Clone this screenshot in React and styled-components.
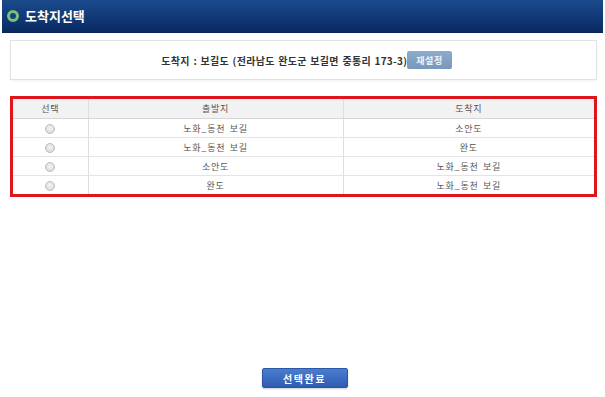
import styled, { createGlobalStyle } from 'styled-components';

const GlobalStyle = createGlobalStyle`
  html, body {
    margin: 0;
    padding: 0;
    background: #fff;
  }
  body {
    font-family: "Noto Sans CJK KR", "Noto Sans", sans-serif;
  }
`;

const routes = [
  { from: '노화_동천 보길', to: '소안도' },
  { from: '노화_동천 보길', to: '완도' },
  { from: '소안도', to: '노화_동천 보길' },
  { from: '완도', to: '노화_동천 보길' },
];

function App() {
  return (
    <>
      <GlobalStyle />
      <Page>
        <TitleBar>
          <Ring />
          <Title>도착지선택</Title>
        </TitleBar>

        <InfoBox>
          <InfoText>도착지 : 보길도 (전라남도 완도군 보길면 중통리 173-3)</InfoText>
          <ResetButton type="button">재설정</ResetButton>
        </InfoBox>

        <TableFrame>
          <Table>
            <colgroup>
              <col style={{ width: 75 }} />
              <col style={{ width: 255 }} />
              <col />
            </colgroup>
            <thead>
              <tr>
                <Th>선택</Th>
                <Th>출발지</Th>
                <Th>도착지</Th>
              </tr>
            </thead>
            <tbody>
              {routes.map((r, i) => (
                <tr key={i}>
                  <Td><Radio /></Td>
                  <Td>{r.from}</Td>
                  <Td>{r.to}</Td>
                </tr>
              ))}
            </tbody>
          </Table>
        </TableFrame>

        <Footer>
          <DoneButton type="button">선택완료</DoneButton>
        </Footer>
      </Page>
    </>
  );
}

export default App;

const Page = styled.div`
  height: 397px;
  display: flex;
  flex-direction: column;
  padding: 0 2px;
  box-sizing: border-box;
`;

const TitleBar = styled.div`
  height: 33px;
  display: flex;
  align-items: center;
  gap: 6px;
  padding-left: 5px;
  background: linear-gradient(to bottom, #1b4b8d 0%, #123a78 50%, #0a2a62 100%);
  border-bottom: 1px solid #0a2255;
  box-sizing: border-box;
`;

const Ring = styled.span`
  width: 6px;
  height: 6px;
  border-radius: 50%;
  border: 3px solid #79c07a;
  background: #16407e;
`;

const Title = styled.h1`
  margin: 0 0 1px;
  font-size: 13px;
  font-weight: bold;
  color: #fff;
`;

const InfoBox = styled.div`
  margin: 7px 6px 0 8px;
  height: 40px;
  display: flex;
  align-items: center;
  justify-content: center;
  gap: 0;
  padding-left: 6px;
  border: 1px solid #e2e2e2;
  box-shadow: 0 1px 2px rgba(0, 0, 0, 0.06);
  box-sizing: border-box;
  background: #fff;
`;

const InfoText = styled.span`
  font-size: 10px;
  font-weight: bold;
  color: #333;
  letter-spacing: 0.3px;
  word-spacing: 1px;
`;

const ResetButton = styled.button`
  height: 18px;
  padding: 0 9px;
  border: none;
  border-radius: 2px;
  background: linear-gradient(to bottom, #8eabc9, #7898bb);
  color: #eef3f8;
  font-family: inherit;
  font-size: 9px;
  font-weight: bold;
  letter-spacing: 0.5px;
`;

const TableFrame = styled.div`
  margin: 16px 6px 0 8px;
  border: 3px solid #e0141b;
  background: #fff;
`;

const Table = styled.table`
  width: 100%;
  border-collapse: collapse;
  table-layout: fixed;
`;

const Th = styled.th`
  height: 19px;
  padding: 0;
  background: #f2f2f2;
  border-bottom: 1px solid #d6d6d6;
  border-left: 1px solid #dedede;
  font-size: 9px;
  font-weight: normal;
  color: #555;
  letter-spacing: 0.8px;
  &:first-child {
    border-left: none;
  }
`;

const Td = styled.td`
  height: 18px;
  padding: 0;
  text-align: center;
  border-bottom: 1px solid #e4e4e4;
  border-left: 1px solid #dedede;
  font-size: 9px;
  color: #555;
  letter-spacing: 0.8px;
  word-spacing: 1.5px;
  &:first-child {
    border-left: none;
  }
  tr:last-child > & {
    border-bottom: none;
  }
`;

const Radio = styled.span`
  display: inline-block;
  vertical-align: middle;
  width: 8px;
  height: 8px;
  border-radius: 50%;
  border: 1px solid #bdbdbd;
  background: radial-gradient(circle at 50% 40%, #f4f4f4, #d4d4d4);
`;

const Footer = styled.div`
  margin-top: auto;
  padding-bottom: 9px;
  display: flex;
  justify-content: center;
`;

const DoneButton = styled.button`
  width: 86px;
  height: 20px;
  border: 1px solid #2c56a3;
  border-radius: 2px;
  background: linear-gradient(to bottom, #4a7dd0, #2f5cb0);
  color: #fff;
  font-family: inherit;
  font-size: 10px;
  font-weight: bold;
  letter-spacing: 1.5px;
  box-shadow: 0 1px 2px rgba(0, 0, 0, 0.2);
  transform: translateX(2px);
`;
